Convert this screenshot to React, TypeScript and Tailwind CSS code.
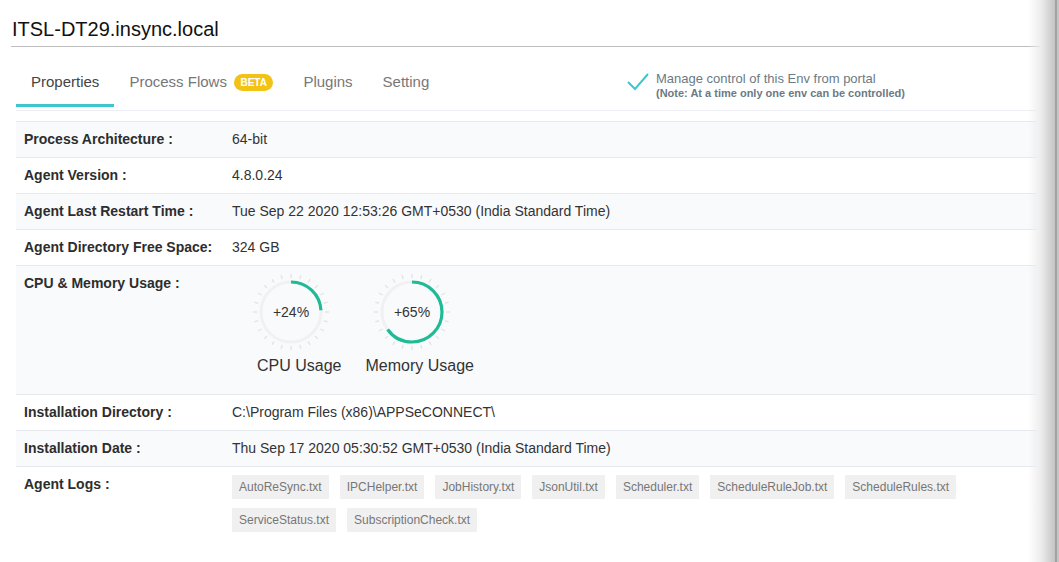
// Agent details view — title, tabs, property rows, usage gauges and log chips.
const FONT = "font-['Liberation_Sans',Arial,sans-serif]";

type Row = { label: string; value?: string; kind?: "gauges" | "logs" };

const ROWS: Row[] = [
  { label: "Process Architecture :", value: "64-bit" },
  { label: "Agent Version :", value: "4.8.0.24" },
  { label: "Agent Last Restart Time :", value: "Tue Sep 22 2020 12:53:26 GMT+0530 (India Standard Time)" },
  { label: "Agent Directory Free Space:", value: "324 GB" },
  { label: "CPU & Memory Usage :", kind: "gauges" },
  { label: "Installation Directory :", value: "C:\\Program Files (x86)\\APPSeCONNECT\\" },
  { label: "Installation Date :", value: "Thu Sep 17 2020 05:30:52 GMT+0530 (India Standard Time)" },
  { label: "Agent Logs :", kind: "logs" },
];

const LOGS = [
  "AutoReSync.txt",
  "IPCHelper.txt",
  "JobHistory.txt",
  "JsonUtil.txt",
  "Scheduler.txt",
  "ScheduleRuleJob.txt",
  "ScheduleRules.txt",
  "ServiceStatus.txt",
  "SubscriptionCheck.txt",
];

const TABS = [
  { label: "Properties", active: true },
  { label: "Process Flows", beta: true },
  { label: "Plugins" },
  { label: "Setting" },
];

function Gauge({ value, label }: { value: number; label: string }) {
  const r = 30;
  const c = 2 * Math.PI * r;
  const ticks = Array.from({ length: 24 }, (_, i) => (i * 360) / 24);
  return (
    <div className="flex flex-col items-center">
      <svg width="80" height="80" viewBox="0 0 80 80" className="-ml-4">
        {ticks.map((a) => {
          const t = ((a - 90) * Math.PI) / 180;
          return (
            <line
              key={a}
              x1={40 + 34 * Math.cos(t)}
              y1={40 + 34 * Math.sin(t)}
              x2={40 + 38 * Math.cos(t)}
              y2={40 + 38 * Math.sin(t)}
              stroke="#e4e4e4"
              strokeWidth="1.4"
            />
          );
        })}
        <circle cx="40" cy="40" r={r} fill="none" stroke="#f1f1f1" strokeWidth="3" />
        <circle
          cx="40"
          cy="40"
          r={r}
          fill="none"
          stroke="#1fba96"
          strokeWidth="3.2"
          strokeDasharray={`${(c * value) / 100} ${c}`}
          transform="rotate(-90 40 40)"
        />
        <text x="40" y="45" textAnchor="middle" fontSize="14" fill="#333" fontFamily="Liberation Sans, Arial, sans-serif">
          +{value}%
        </text>
      </svg>
      <span className="mt-[2px] text-base leading-6 text-[#333]">{label}</span>
    </div>
  );
}

export default function App() {
  return (
    <div className={`relative h-[562px] w-full overflow-hidden bg-white ${FONT}`}>
      <div className="w-[1042px] pl-[11px]">
        <h1 className="border-b border-[#bdbdbd] pb-[3px] pt-[15px] pl-px text-xl leading-7 text-[#111]">ITSL-DT29.insync.local</h1>

        <div className="mr-[5px] ml-[5px]">
          <div className="mt-[13px] flex border-b border-[#eceef3]">
            <nav className="flex">
              {TABS.map((t) => (
                <div
                  key={t.label}
                  className={`mb-[3px] flex items-center gap-[7px] border-b-[3px] px-[15px] pb-3 pt-3 text-[15px] leading-5 ${t.active ? "border-[#3ec6d0] text-[#444]" : "border-transparent text-[#777]"}`}
                >
                  {t.label}
                  {t.beta && (
                    <span className="rounded-full bg-[#f2c315] px-[6.5px] text-[10px] font-bold leading-[17px] text-white">BETA</span>
                  )}
                </div>
              ))}
            </nav>
            <div className="ml-auto flex w-[410px] items-start gap-2 pt-[11px]">
              <svg width="22" height="18" viewBox="0 0 22 18" className="mt-[2px]">
                <polyline points="1,9 8,16 21,1" fill="none" stroke="#3ec6d0" strokeWidth="2" />
              </svg>
              <div className="-ml-px text-[#6b7a84]">
                <p className="text-[13px] leading-4">Manage control of this Env from portal</p>
                <p className="text-[11px] font-bold leading-[13px]">(Note: At a time only one env can be controlled)</p>
              </div>
            </div>
          </div>

          <div className="mt-[10px]">
            {ROWS.map((row, i) => (
              <div
                key={row.label}
                className={`flex border-t border-[#e6e9ee] text-sm ${i % 2 === 0 ? "bg-[#f9fafc]" : "bg-white"}`}
              >
                <div className="w-[216px] shrink-0 pb-[8px] pl-2 pt-[7px] font-bold leading-5 text-[#2d2d2d]">{row.label}</div>
                {row.kind === "gauges" ? (
                  <div className="flex gap-6 pb-[16px] pl-[25px] pt-[6px]">
                    <Gauge value={24} label="CPU Usage" />
                    <Gauge value={65} label="Memory Usage" />
                  </div>
                ) : row.kind === "logs" ? (
                  <div className="flex flex-1 flex-wrap gap-x-[11px] gap-y-[9px] pb-4 pt-2">
                    {LOGS.map((l) => (
                      <span key={l} className="bg-[#f0f0f0] px-[7px] text-[12px] leading-6 text-[#777]">{l}</span>
                    ))}
                  </div>
                ) : (
                  <div className="pb-[8px] pt-[7px] leading-5 text-[#333]">{row.value}</div>
                )}
              </div>
            ))}
          </div>
        </div>
      </div>

      {/* scroll shadow at the right edge */}
      <div className="pointer-events-none absolute right-0 top-0 flex h-full w-[31px]">
        <div className="flex-1 bg-linear-to-r from-white/0 via-[#ececec] to-[#c4c4c4]" />
        <div className="w-[2px] bg-[#a2a2a2]" />
        <div className="w-[2px] bg-[#c6c6c6]" />
      </div>
    </div>
  );
}
